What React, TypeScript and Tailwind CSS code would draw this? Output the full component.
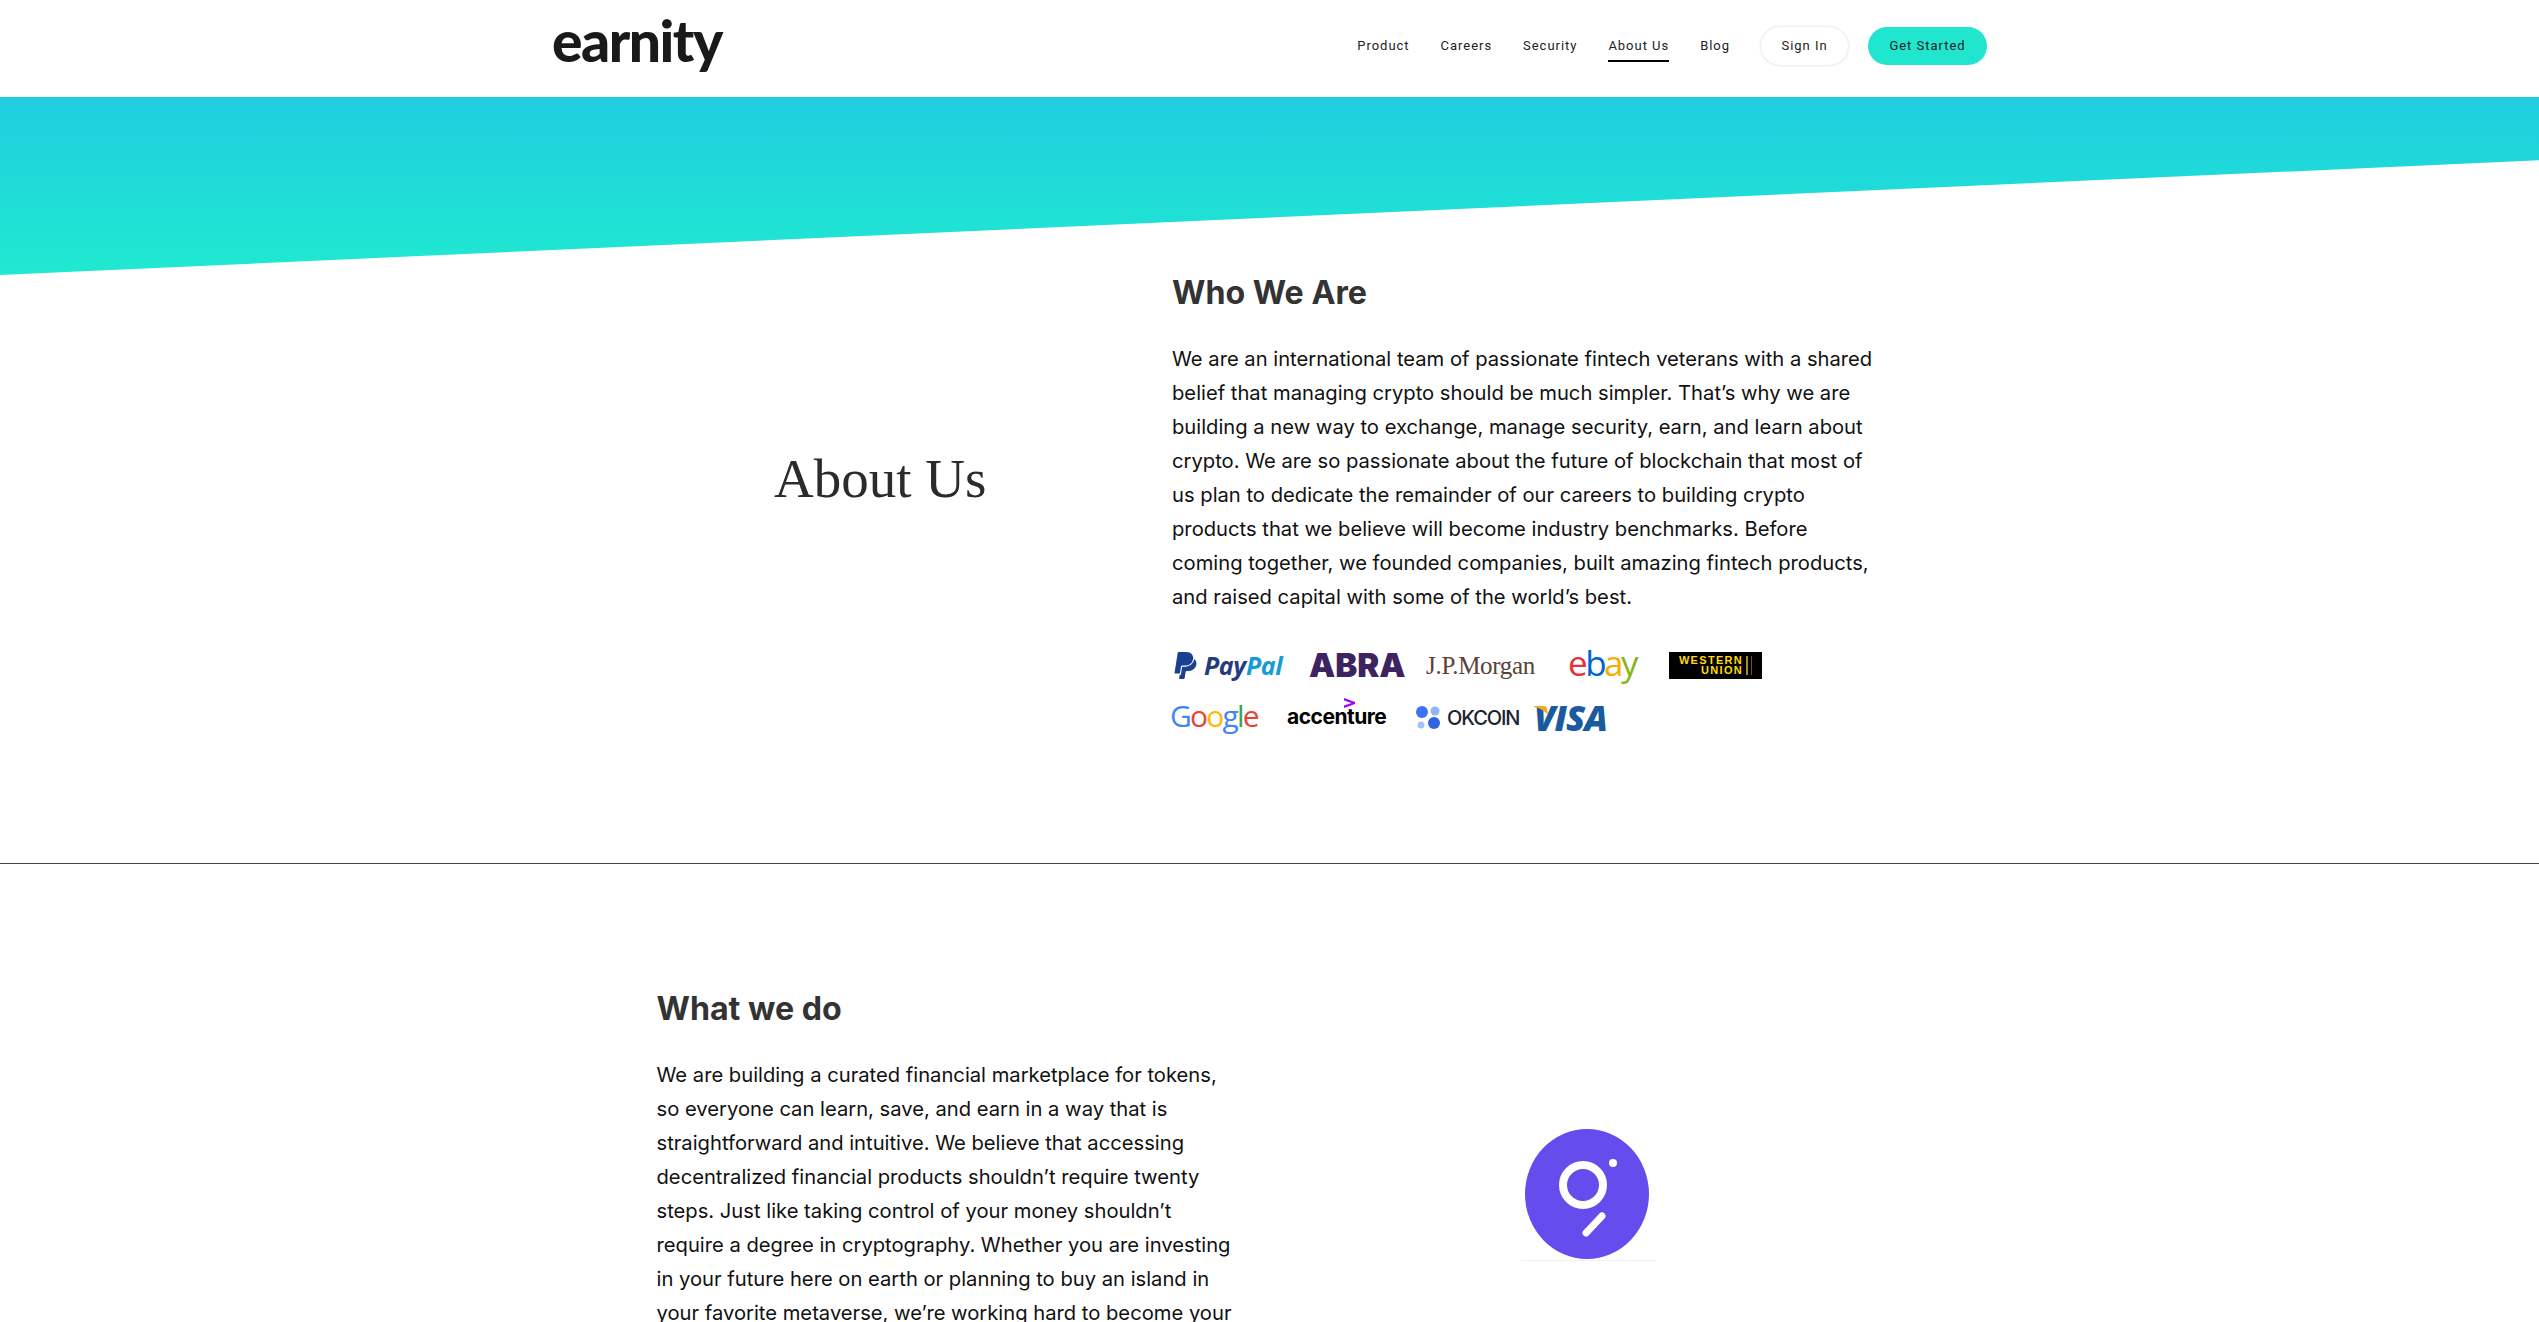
import { SiPaypal } from "react-icons/si";

const nav = ["Product", "Careers", "Security", "About Us", "Blog"];

function Logos() {
  return (
    <div className="mt-[31px] flex flex-col">
      <div className="flex h-[40px] items-center">
        <div className="flex w-[137px] items-center">
          <SiPaypal className="h-[29px] w-[27px] text-[#1b3f92]" />
          <span className="ml-[5px] font-['Open_Sans'] text-[25px] font-bold italic leading-none tracking-[-0.4px] text-[#253b80]">
            Pay<span className="text-[#179bd7]">Pal</span>
          </span>
        </div>
        <span className="w-[117px] font-['Inter'] text-[33px] font-black leading-none text-[#3d2360]">ABRA</span>
        <span className="w-[142px] font-['Liberation_Serif'] text-[25px] leading-none tracking-[-0.3px] text-[#5a4238]">J.P.Morgan</span>
        <span className="w-[101px] pb-[5px] font-['Open_Sans'] text-[35px] leading-none tracking-[-2.5px]">
          <span className="text-[#e53238]">e</span>
          <span className="text-[#0064d2]">b</span>
          <span className="text-[#f5af02]">a</span>
          <span className="text-[#86b817]">y</span>
        </span>
        <div className="flex h-[27px] w-[93px] items-center justify-center gap-[3px] bg-black">
          <div className="flex flex-col items-end font-['Liberation_Sans'] text-[11px] font-bold leading-[10px] tracking-[1.3px] text-[#ffdd00]">
            <span>WESTERN</span>
            <span>UNION</span>
          </div>
          <div className="h-[19px] w-[2px] bg-[#a88f1a]" />
          <div className="h-[19px] w-px bg-[#6b5a10]" />
        </div>
      </div>
      <div className="mt-[13px] flex h-[40px] items-center">
        <span className="-ml-[2px] w-[117px] pb-[4px] font-['Open_Sans'] text-[30px] leading-none tracking-[-1.8px]">
          <span className="text-[#4285f4]">G</span>
          <span className="text-[#ea4335]">o</span>
          <span className="text-[#fbbc05]">o</span>
          <span className="text-[#4285f4]">g</span>
          <span className="text-[#34a853]">l</span>
          <span className="text-[#ea4335]">e</span>
        </span>
        <div className="relative w-[129px]">
          <span className="font-['Inter'] text-[21px] font-bold leading-none tracking-[-0.5px] text-black">accenture</span>
          <svg width="11" height="10" viewBox="0 0 11 10" className="absolute left-[57px] top-[-8px]">
            <path d="M0 0l11 4v2L0 10V7.6L7.6 5 0 2.4z" fill="#a100ff" />
          </svg>
        </div>
        <div className="flex w-[118px] items-center">
          <svg width="26" height="26" viewBox="0 0 26 26" className="shrink-0">
            <circle cx="6" cy="7" r="6" fill="#3b74f0" />
            <circle cx="19" cy="6" r="4.5" fill="#8fb5f7" />
            <circle cx="5" cy="20" r="3.5" fill="#a3c3f8" />
            <circle cx="18" cy="18" r="6" fill="#2f63e0" />
          </svg>
          <span className="ml-[5px] font-['Inter'] text-[20px] font-medium leading-none tracking-[-1.1px] text-[#1c2230]">OKCOIN</span>
        </div>
        <div className="relative">
          <span className="font-['Open_Sans'] text-[35px] font-extrabold italic leading-none tracking-[-1px] text-[#1a5a9e]">VISA</span>
          <svg width="14" height="10" viewBox="0 0 14 10" className="absolute left-0 top-[6px]">
            <path d="M0 0h10c1.5 0 2.5 1 3 3l1 6C11 5 6 2 0 1z" fill="#f7a823" />
          </svg>
        </div>
      </div>
    </div>
  );
}

export default function App() {
  return (
    <div className="h-screen overflow-hidden bg-white font-['Inter',sans-serif] text-[#111]">
      <header className="h-[97px] bg-white">
        <div className="mx-auto flex h-full w-[1435px] items-center justify-between">
          <span className="pb-[16px] font-['Lato'] text-[57px] font-black leading-none tracking-[-1.5px] text-[#1a1a1a]">earnity</span>
          <nav className="flex items-center pb-[5px] font-['Roboto'] text-[13px] font-normal tracking-[0.97px] text-[#222]">
            {nav.map((item) => (
              <a
                key={item}
                className={
                  item === "About Us"
                    ? "mr-[31px] border-b-2 border-black pb-[4px] pt-[6px]"
                    : "mr-[31px] border-b-2 border-transparent pb-[4px] pt-[6px]"
                }
              >
                {item}
              </a>
            ))}
            <a className="flex h-[38px] w-[87px] items-center justify-center rounded-full bg-white shadow-[0_0_3px_rgba(0,0,0,0.18)]">Sign In</a>
            <a className="ml-[20px] flex h-[38px] w-[119px] items-center justify-center rounded-full bg-[#20e6cf]">Get Started</a>
          </nav>
        </div>
      </header>

      <div className="h-[178px] bg-gradient-to-b from-[#20cde0] to-[#20e9d0] [clip-path:polygon(0_0,100%_0,100%_35.5%,0_100%)]" />

      <section className="-mt-[2px] border-b border-[#444] pb-[125px]">
        <div className="mx-auto flex w-[1435px]">
          <div className="flex w-[620px] items-center justify-end pb-[54px]">
            <h1 className="w-[398px] font-['Liberation_Serif'] text-[55px] font-normal leading-none text-[#2b2b2b]">About Us</h1>
          </div>
          <div className="w-[706px]">
            <h2 className="font-['Inter'] text-[32.2px] font-bold leading-[40px] text-[#333]">Who We Are</h2>
            <p className="mt-[29px] text-[20.2px] leading-[34px]">
              We are an international team of passionate fintech veterans with a shared belief that managing crypto should be much simpler. That’s why we are building a new way to exchange, manage security, earn, and learn about crypto. We are so passionate about the future of blockchain that most of us plan to dedicate the remainder of our careers to building crypto products that we believe will become industry benchmarks. Before coming together, we founded companies, built amazing fintech products, and raised capital with some of the world’s best.
            </p>
            <Logos />
          </div>
        </div>
      </section>

      <section className="pt-[125px]">
        <div className="mx-auto flex w-[1226px]">
          <div className="w-[576px]">
            <h2 className="font-['Inter'] text-[32.2px] font-bold leading-[40px] text-[#333]">What we do</h2>
            <p className="mt-[29px] text-[20.2px] leading-[34px]">
              We are building a curated financial marketplace for tokens, so everyone can learn, save, and earn in a way that is straightforward and intuitive. We believe that accessing decentralized financial products shouldn’t require twenty steps. Just like taking control of your money shouldn’t require a degree in cryptography. Whether you are investing in your future here on earth or planning to buy an island in your favorite metaverse, we’re working hard to become your
            </p>
          </div>
          <div className="ml-[288px] mt-[140px] w-[135px] self-start border-b border-[#f1f1f1]">
            <svg width="135" height="131" viewBox="0 0 135 131" className="block">
              <ellipse cx="66" cy="65" rx="62" ry="65" fill="#644ced" />
              <circle cx="62" cy="56" r="20" fill="none" stroke="#fff" strokeWidth="8" />
              <circle cx="92" cy="34" r="4" fill="#fff" />
              <line x1="81" y1="87" x2="65" y2="104" stroke="#fff" strokeWidth="7" strokeLinecap="round" />
            </svg>
          </div>
        </div>
      </section>
    </div>
  );
}
